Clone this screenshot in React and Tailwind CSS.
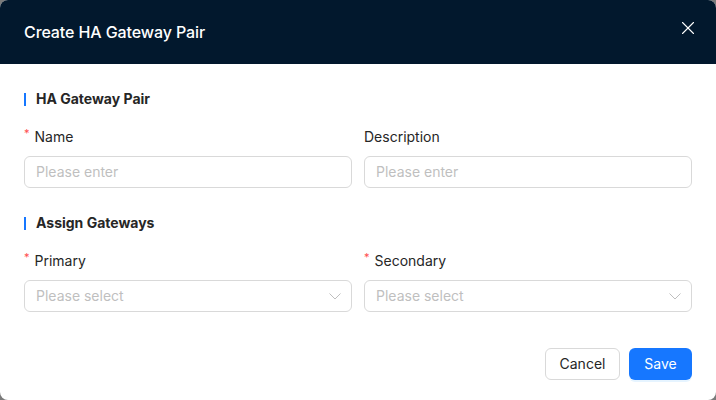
import { X } from 'lucide-react';

function Chevron() {
    return (
        <svg width="12" height="7" viewBox="0 0 12 7" fill="none" className="mr-[-1px]">
            <path d="M0.5 0.5 L6 6 L11.5 0.5" stroke="#bfbfbf" strokeWidth="1" />
        </svg>
    );
}

function Field({ label, required, placeholder, select }) {
    return (
        <div className="flex flex-col">
            <label className="h-[22px] flex items-center text-sm text-[#262626] mb-2">
                {required && <span className="text-[#ff4d4f] text-[11px] mr-[5px] -mt-[6px]">*</span>}
                {label}
            </label>
            <div className="h-8 rounded-md border border-[#d9d9d9] bg-white px-[11px] flex items-center justify-between">
                <span className="text-sm text-[#bfbfbf]">{placeholder}</span>
                {select && <Chevron />}
            </div>
        </div>
    );
}

function SectionTitle({ children }) {
    return (
        <div className="flex items-center h-[22px] mb-4">
            <span className="w-[2px] h-[13px] bg-[#1677ff] mr-[10px]" />
            <span className="text-sm font-bold text-[#262626]">{children}</span>
        </div>
    );
}

export default function App() {
    return (
        <div className="w-[716px] h-[400px] bg-[#7a7a7a]" style={{ fontFamily: 'Inter, "Noto Sans", sans-serif' }}>
            <div className="w-full h-full bg-white rounded-lg overflow-hidden flex flex-col">
                <div className="h-16 bg-[#02182d] flex items-center justify-between px-6 shrink-0">
                    <h1 className="text-white text-base font-medium tracking-[-0.1px]">Create HA Gateway Pair</h1>
                    <X size={22} strokeWidth={1.2} className="text-white mr-[-7px] -mt-[8px]" />
                </div>
                <div className="px-6 pt-6">
                    <SectionTitle>HA Gateway Pair</SectionTitle>
                    <div className="grid grid-cols-2 gap-3">
                        <Field label="Name" required placeholder="Please enter" />
                        <Field label="Description" placeholder="Please enter" />
                    </div>
                    <div className="mt-6">
                        <SectionTitle>Assign Gateways</SectionTitle>
                    </div>
                    <div className="grid grid-cols-2 gap-3">
                        <Field label="Primary" required placeholder="Please select" select />
                        <Field label="Secondary" required placeholder="Please select" select />
                    </div>
                    <div className="flex justify-end gap-[9px] mt-9">
                        <button className="h-8 w-[75px] rounded-md border border-[#d9d9d9] bg-white text-sm text-[#262626]">
                            Cancel
                        </button>
                        <button className="h-8 w-[63px] rounded-md bg-[#1677ff] text-sm text-white shadow-[0_2px_0_rgba(5,145,255,0.1)]">
                            Save
                        </button>
                    </div>
                </div>
            </div>
        </div>
    );
}
